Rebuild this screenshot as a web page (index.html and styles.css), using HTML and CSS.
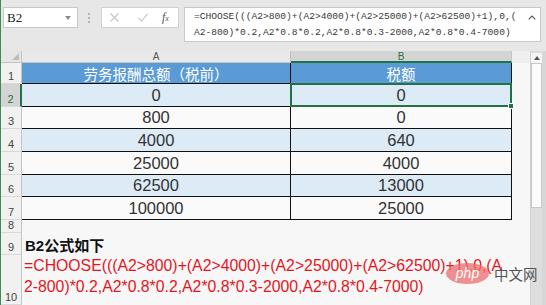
FILE: index.html
```html
<!DOCTYPE html>
<html lang="zh-CN">
<head>
<meta charset="utf-8">
<title>Excel CHOOSE</title>
<link rel="stylesheet" href="styles.css">
</head>
<body>
<div class="app">
  <div class="toolbar">
    <div class="namebox">
      <span class="nb-text">B2</span>
      <svg class="nb-caret" width="6" height="4" viewBox="0 0 6 4"><path d="M0 0H6L3 4Z" fill="#8a8a8a"/></svg>
    </div>
    <div class="dots"><i></i><i></i><i></i></div>
    <div class="fbtns">
      <svg class="ic-x" width="9" height="9" viewBox="0 0 9 9"><path d="M0.5 0.5L8.5 8.5M8.5 0.5L0.5 8.5" stroke="#c4c4c4" stroke-width="1.1" fill="none"/></svg>
      <svg class="ic-ok" width="10" height="9" viewBox="0 0 10 9"><path d="M0.5 4.8L3.6 8L9.5 0.8" stroke="#c4c4c4" stroke-width="1.1" fill="none"/></svg>
      <span class="fx"><i>f</i><small>x</small></span>
    </div>
    <div class="fbox">
      <div class="ftext">=CHOOSE(((A2&gt;800)+(A2&gt;4000)+(A2&gt;25000)+(A2&gt;62500)+1),0,(<br>A2-800)*0.2,A2*0.8*0.2,A2*0.8*0.3-2000,A2*0.8*0.4-7000)</div>
      <svg class="chev" width="8" height="5" viewBox="0 0 8 5"><path d="M0.7 4.3L4 1L7.3 4.3" stroke="#555" stroke-width="1.1" fill="none"/></svg>
    </div>
  </div>

  <div class="main">
    <div class="sheet">
      <div class="corner"><span class="tri"></span></div>
      <div class="colh">A</div>
      <div class="colh sel">B</div>
      <div class="colh rest"></div>

      <div class="rowh">1</div>
      <div class="c t head">劳务报酬总额（税前）</div>
      <div class="c t head">税额</div>
      <div class="c e"></div>

      <div class="rowh sel">2</div>
      <div class="c t blue">0</div>
      <div class="c t blue active">0<span class="handle"></span></div>
      <div class="c e"></div>

      <div class="rowh">3</div>
      <div class="c t white">800</div>
      <div class="c t white">0</div>
      <div class="c e"></div>

      <div class="rowh">4</div>
      <div class="c t blue">4000</div>
      <div class="c t blue">640</div>
      <div class="c e"></div>

      <div class="rowh">5</div>
      <div class="c t white">25000</div>
      <div class="c t white">4000</div>
      <div class="c e"></div>

      <div class="rowh">6</div>
      <div class="c t blue">62500</div>
      <div class="c t blue">13000</div>
      <div class="c e"></div>

      <div class="rowh">7</div>
      <div class="c t white">100000</div>
      <div class="c t white">25000</div>
      <div class="c e"></div>

      <div class="rowh">8</div>
      <div class="c e"></div>
      <div class="c e"></div>
      <div class="c e"></div>

      <div class="rowh">9</div>
      <div class="c e note">B2公式如下</div>
      <div class="c e"></div>
      <div class="c e"></div>

      <div class="rowh">10</div>
      <div class="c e formula">=CHOOSE(((A2&gt;800)+(A2&gt;4000)+(A2&gt;25000)+(A2&gt;62500)+1),0,(A<br>2-800)*0.2,A2*0.8*0.2,A2*0.8*0.3-2000,A2*0.8*0.4-7000)</div>
      <div class="c e"></div>
      <div class="c e"></div>
    </div>

    <div class="vscroll">
      <div class="up"><svg width="6" height="4" viewBox="0 0 6 4"><path d="M0 4H6L3 0Z" fill="#555"/></svg></div>
      <div class="thumb"></div>
      <div class="track"></div>
    </div>
    <div class="filler"></div>
  </div>

  <div class="watermark"><span class="php">php</span><span class="cn">中文网</span></div>
</div>
</body>
</html>
```

FILE: styles.css
```css
html, body {
  margin: 0;
  padding: 0;
}
body {
  width: 546px;
  height: 305px;
  overflow: hidden;
  background: #e6e6e6;
  font-family: "Liberation Sans", Arial, "Noto Sans CJK SC", sans-serif;
}
.app {
  position: relative;
  height: 305px;
  box-sizing: border-box;
  border-left: 1px solid #3d8b57;
}

/* ---------- toolbar ---------- */
.toolbar {
  height: 51px;
  box-sizing: border-box;
  padding: 7px 0 0 2px;
  display: flex;
  align-items: flex-start;
  background: #e7e7e7;
}
.namebox {
  width: 75px;
  height: 21px;
  box-sizing: border-box;
  background: #fff;
  border: 1px solid #c9c9c9;
  display: flex;
  align-items: center;
  padding: 0 6px 0 3px;
}
.nb-text {
  flex: 1;
  font-family: "Liberation Serif", serif;
  font-size: 13px;
  color: #222;
}
.dots {
  width: 2px;
  height: 21px;
  margin-left: 10px;
  display: flex;
  flex-direction: column;
  justify-content: center;
  gap: 2px;
}
.dots i {
  display: block;
  width: 2px;
  height: 2px;
  background: #b5b5b5;
}
.fbtns {
  margin-left: 11px;
  width: 78px;
  height: 21px;
  box-sizing: border-box;
  background: #fff;
  border: 1px solid #d2d2d2;
  display: flex;
  align-items: center;
  padding-left: 8px;
}
.ic-ok {
  margin-left: 19px;
}
.fx {
  margin-left: 14px;
  font-family: "Liberation Serif", serif;
  color: #555;
  font-size: 12px;
}
.fx i {
  font-style: italic;
}
.fx small {
  font-size: 8px;
  font-style: italic;
}
.fbox {
  margin-left: 5px;
  width: 357px;
  height: 35px;
  box-sizing: border-box;
  background: #fff;
  border: 1px solid #c9c9c9;
  display: flex;
  align-items: flex-start;
  padding: 1px 0 0 9px;
}
.ftext {
  flex: 1;
  font-family: "Liberation Mono", monospace;
  font-size: 9.6px;
  line-height: 16px;
  color: #3a3a3a;
  white-space: nowrap;
}
.chev {
  margin: 6px 4px 0 0;
}

/* ---------- main area ---------- */
.main {
  display: flex;
  height: 254px;
}
.sheet {
  width: 529px;
  display: grid;
  grid-template-columns: 21px 269px 221px 18px;
  grid-template-rows: 12px 21px 23px 22px 23px 23px 22px 23px 13px 22px 50px;
  background: #f7f7f7;
}
.corner {
  position: relative;
  background: #e6e6e6;
  border-right: 1px solid #c4c4c4;
  border-bottom: 1px solid #c4c4c4;
  box-sizing: border-box;
}
.tri {
  position: absolute;
  right: 2px;
  bottom: 2px;
  width: 0;
  height: 0;
  border-left: 7px solid transparent;
  border-bottom: 7px solid #bdbdbd;
}
.colh {
  box-sizing: border-box;
  background: #e9e9e9;
  border-right: 1px solid #c4c4c4;
  border-bottom: 1px solid #c4c4c4;
  font-size: 10px;
  line-height: 12px;
  text-align: center;
  color: #555;
}
.colh.sel {
  background: #d4d4d4;
  color: #2f6f46;
  border-bottom: 2px solid #217346;
  line-height: 11px;
}
.colh.rest {
  background: #efefef;
  border: none;
}
.rowh {
  box-sizing: border-box;
  background: #f1f1f1;
  border-right: 1px solid #c4c4c4;
  border-bottom: 1px solid #d9d9d9;
  font-size: 11px;
  color: #444;
  display: flex;
  align-items: flex-end;
  justify-content: center;
  padding-bottom: 1px;
}
.rowh.sel {
  background: #d4d4d4;
  color: #217346;
  border-right: 2px solid #217346;
}
.c {
  box-sizing: border-box;
  display: flex;
  align-items: center;
  justify-content: center;
  font-size: 16.5px;
  color: #333;
  white-space: nowrap;
}
.t {
  border-right: 1px solid #111;
  border-bottom: 1px solid #111;
}
.head {
  background: #5b9bd5;
  color: #fff;
  font-family: "Noto Sans CJK SC", sans-serif;
  font-size: 14.5px;
  padding-top: 1px;
}
.blue {
  background: #ddebf7;
}
.white {
  background: #fafafa;
}
.e {
  background: #f7f7f7;
}
.active {
  position: relative;
}
.active::after {
  content: "";
  position: absolute;
  left: -1px;
  top: -1px;
  right: -1px;
  bottom: -1px;
  border: 2px solid #217346;
}
.handle {
  position: absolute;
  right: -3px;
  bottom: -3px;
  width: 4px;
  height: 4px;
  background: #217346;
  border: 1px solid #fff;
  z-index: 2;
}
.note {
  justify-content: flex-start;
  padding-left: 3px;
  font-family: "Liberation Sans", "Noto Sans CJK SC", sans-serif;
  font-weight: bold;
  font-size: 15px;
  color: #111;
}
.formula {
  position: relative;
  z-index: 1;
  overflow: visible;
  display: block;
  padding: 0 0 0 2px;
  font-size: 15.8px;
  line-height: 21px;
  color: #e4161e;
}

/* ---------- scrollbar ---------- */
.vscroll {
  width: 12px;
  box-sizing: border-box;
  border-left: 1px solid #cfcfcf;
  background: #dcdcdc;
  display: flex;
  flex-direction: column;
  padding-top: 2px;
}
.up {
  height: 10px;
  display: flex;
  align-items: center;
  justify-content: center;
  background: #f5f5f5;
}
.thumb {
  height: 145px;
  box-sizing: border-box;
  background: #fbfbfb;
  border: 1px solid #c8c8c8;
}
.track {
  flex: 1;
  background: #dddddd;
}
.filler {
  width: 4px;
  background: #d7d7d7;
}

/* ---------- watermark ---------- */
.watermark {
  position: absolute;
  left: 445px;
  top: 263px;
  display: flex;
  align-items: center;
  gap: 5px;
  z-index: 5;
}
.php {
  width: 43px;
  height: 21px;
  border-radius: 50%;
  background: rgba(236, 110, 110, 0.75);
  color: #fff;
  font-family: "Liberation Sans", sans-serif;
  font-style: italic;
  font-size: 14px;
  line-height: 20px;
  text-align: center;
}
.cn {
  font-family: "Noto Sans CJK SC", sans-serif;
  font-size: 14.5px;
  color: #555;
  line-height: 20px;
}
```
